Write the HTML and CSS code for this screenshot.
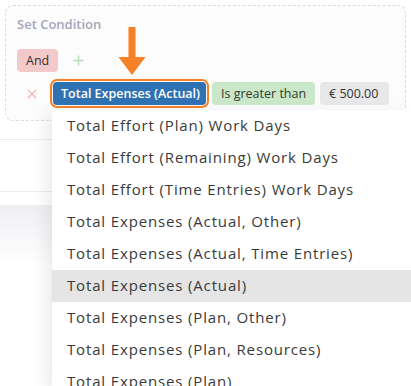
FILE: index.html
```html
<!DOCTYPE html>
<html>
<head>
<meta charset="utf-8">
<link rel="stylesheet" href="styles.css">
</head>
<body>
<div class="page">
  <div class="card">
    <div class="title">Set Condition</div>
    <div class="row-logic">
      <span class="chip chip-and">And</span>
      <svg class="plus" width="11" height="11" viewBox="0 0 11 11"><path d="M5.5 0.5v10M0.5 5.5h10" stroke="#b5dcb5" stroke-width="1.4" fill="none"/></svg>
    </div>
    <div class="row-cond">
      <svg class="remove" width="10" height="10" viewBox="0 0 10 10"><path d="M1 1l8 8M9 1l-8 8" stroke="#f2b5b5" stroke-width="1.3" fill="none"/></svg>
      <span class="chip chip-field">Total Expenses (Actual)</span>
      <span class="chip chip-op">Is greater than</span>
      <span class="chip chip-val">€ 500.00</span>
    </div>
  </div>
  <div class="table-bg">
    <div class="tline"></div>
    <div class="tline second"></div>
    <div class="band"></div>
  </div>

  <svg class="arrow" width="30" height="50" viewBox="0 0 30 50"><path d="M11.5 0h7v30h10L15 48 1.5 30h10z" fill="#f58025"/></svg>

  <ul class="menu">
    <li>Total Effort (Plan) Work Days</li>
    <li>Total Effort (Remaining) Work Days</li>
    <li>Total Effort (Time Entries) Work Days</li>
    <li>Total Expenses (Actual, Other)</li>
    <li>Total Expenses (Actual, Time Entries)</li>
    <li class="active">Total Expenses (Actual)</li>
    <li>Total Expenses (Plan, Other)</li>
    <li>Total Expenses (Plan, Resources)</li>
    <li>Total Expenses (Plan)</li>
  </ul>
</div>
</body>
</html>
```
FILE: styles.css
```css
* { box-sizing: border-box; }
html, body { margin: 0; padding: 0; }
body {
  width: 411px;
  height: 386px;
  overflow: hidden;
  background: #ffffff;
  font-family: "Open Sans", "Liberation Sans", sans-serif;
  color: #333;
}
.page {
  position: relative;
  width: 411px;
  height: 386px;
  overflow: hidden;
  padding-top: 5px;
}
.card {
  margin: 0 5px 0 5px;
  height: 116px;
  border: 1px dashed #dcdbea;
  border-radius: 8px;
  padding: 9px 11px 0 11px;
  background: #fcfcfd;
}
.title {
  font-size: 13px;
  font-weight: 600;
  color: #a5a5ba;
  line-height: 18px;
}
.row-logic {
  display: flex;
  align-items: center;
  gap: 15px;
  margin-top: 16px;
}
.chip {
  display: inline-flex;
  align-items: center;
  height: 23px;
  border-radius: 4px;
  font-size: 12.5px;
  padding: 0 9px;
  white-space: nowrap;
}
.chip-and {
  background: #f4c9c9;
  color: #3a2b2b;
  width: 41px;
  padding: 0 0 0 9px;
}
.row-cond {
  display: flex;
  align-items: center;
  margin-top: 10px;
}
.remove { margin: 0 16px 0 10px; }
.chip-field {
  background: #2f72b3;
  color: #fff;
  font-weight: 600;
  width: 153px;
  padding: 0 8px;
  outline: 2px solid #f58025;
  outline-offset: 1px;
}
.chip-op {
  background: #cbe7c9;
  color: #2f3b2f;
  margin-left: 6px;
  width: 103px;
  padding: 0 9px;
}
.chip-val {
  background: #e8e8ea;
  color: #333;
  margin-left: 5px;
  width: 69px;
  padding: 0 9px;
}
.table-bg {
  height: 270px;
}
.tline {
  margin-top: 18px;
  border-top: 1px solid #ebeaf1;
}
.tline.second { margin-top: 51px; }
.band {
  margin-top: 13px;
  height: 60px;
  background: linear-gradient(#efeff3, #ffffff);
}
.arrow {
  position: absolute;
  left: 117px;
  top: 27px;
}
.menu {
  position: absolute;
  left: 52px;
  top: 110px;
  right: 0;
  bottom: 0;
  margin: 0;
  padding: 0;
  list-style: none;
  background: #fff;
  box-shadow: -6px 4px 14px rgba(60, 60, 90, 0.10);
}
.menu li {
  height: 32px;
  line-height: 31px;
  padding-left: 15px;
  font-size: 15px;
  letter-spacing: 0.85px;
  color: #3a3a3a;
  white-space: nowrap;
}
.menu li.active { background: #e5e5e5; }
```
